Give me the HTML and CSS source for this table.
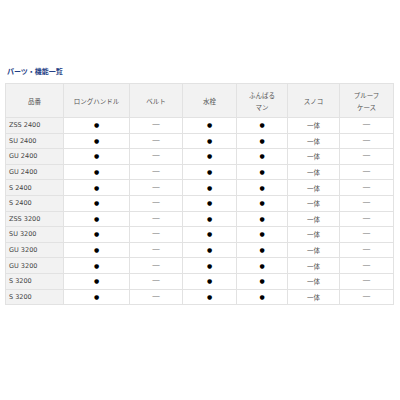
FILE: index.html
```html
<!DOCTYPE html>
<html lang="ja">
<head>
<meta charset="utf-8">
<link rel="stylesheet" href="styles.css">
</head>
<body>
<div class="wrap">
  <h2 class="title">パーツ・機能一覧</h2>
  <table class="spec">
    <colgroup>
      <col class="c1"><col class="c2"><col class="c3"><col class="c4"><col class="c5"><col class="c6"><col class="c7">
    </colgroup>
    <thead>
      <tr><th>品番</th><th>ロングハンドル</th><th>ベルト</th><th>水栓</th><th>ふんばる<br>マン</th><th>スノコ</th><th>プルーフ<br>ケース</th></tr>
    </thead>
    <tbody>
      <tr><td class="name">ZSS 2400</td><td class="dot">●</td><td class="dash">—</td><td class="dot">●</td><td class="dot">●</td><td class="txt">一体</td><td class="dash">—</td></tr>
      <tr><td class="name">SU 2400</td><td class="dot">●</td><td class="dash">—</td><td class="dot">●</td><td class="dot">●</td><td class="txt">一体</td><td class="dash">—</td></tr>
      <tr><td class="name">GU 2400</td><td class="dot">●</td><td class="dash">—</td><td class="dot">●</td><td class="dot">●</td><td class="txt">一体</td><td class="dash">—</td></tr>
      <tr><td class="name">GU 2400</td><td class="dot">●</td><td class="dash">—</td><td class="dot">●</td><td class="dot">●</td><td class="txt">一体</td><td class="dash">—</td></tr>
      <tr><td class="name">S 2400</td><td class="dot">●</td><td class="dash">—</td><td class="dot">●</td><td class="dot">●</td><td class="txt">一体</td><td class="dash">—</td></tr>
      <tr><td class="name">S 2400</td><td class="dot">●</td><td class="dash">—</td><td class="dot">●</td><td class="dot">●</td><td class="txt">一体</td><td class="dash">—</td></tr>
      <tr><td class="name">ZSS 3200</td><td class="dot">●</td><td class="dash">—</td><td class="dot">●</td><td class="dot">●</td><td class="txt">一体</td><td class="dash">—</td></tr>
      <tr><td class="name">SU 3200</td><td class="dot">●</td><td class="dash">—</td><td class="dot">●</td><td class="dot">●</td><td class="txt">一体</td><td class="dash">—</td></tr>
      <tr><td class="name">GU 3200</td><td class="dot">●</td><td class="dash">—</td><td class="dot">●</td><td class="dot">●</td><td class="txt">一体</td><td class="dash">—</td></tr>
      <tr><td class="name">GU 3200</td><td class="dot">●</td><td class="dash">—</td><td class="dot">●</td><td class="dot">●</td><td class="txt">一体</td><td class="dash">—</td></tr>
      <tr><td class="name">S 3200</td><td class="dot">●</td><td class="dash">—</td><td class="dot">●</td><td class="dot">●</td><td class="txt">一体</td><td class="dash">—</td></tr>
      <tr><td class="name">S 3200</td><td class="dot">●</td><td class="dash">—</td><td class="dot">●</td><td class="dot">●</td><td class="txt">一体</td><td class="dash">—</td></tr>
    </tbody>
  </table>
</div>
</body>
</html>
```
FILE: styles.css
```css
html, body {
  margin: 0;
  padding: 0;
  background: #ffffff;
}
body {
  font-family: "DejaVu Sans", "Noto Sans CJK JP", sans-serif;
  color: #444;
}
.wrap {
  padding: 67px 0 0 5px;
  width: 388px;
}
.title {
  margin: 0 0 7px 2px;
  font-size: 7px;
  line-height: 9px;
  font-weight: bold;
  color: #1f3f86;
  font-family: "Noto Sans CJK JP", sans-serif;
}
.spec {
  width: 388px;
  border-collapse: collapse;
  table-layout: fixed;
  font-size: 6.5px;
}
.c1 { width: 58px; }
.c2 { width: 66px; }
.c3 { width: 53px; }
.c4 { width: 54px; }
.c5 { width: 51px; }
.c6 { width: 52px; }
.c7 { width: 54px; }
.spec th, .spec td {
  border: 1px solid #e2e2e2;
  text-align: center;
  padding: 0;
}
.spec th {
  background: #f2f2f2;
  height: 33px;
  font-weight: normal;
  font-family: "Noto Sans CJK JP", sans-serif;
  font-size: 6.5px;
  line-height: 12px;
  color: #555;
}
.spec td {
  height: 14.6px;
  line-height: 8px;
}
.spec td.name {
  background: #f2f2f2;
  text-align: left;
  padding-left: 3px;
  font-family: "DejaVu Sans", sans-serif;
  color: #444;
}
.spec td.dot {
  font-family: "DejaVu Sans", sans-serif;
  font-size: 6px;
  color: #000;
}
.spec td.dash {
  font-family: "DejaVu Sans", sans-serif;
  font-size: 8px;
  color: #8c8c8c;
}
.spec td.txt {
  font-family: "Noto Sans CJK JP", sans-serif;
  color: #555;
}
```
